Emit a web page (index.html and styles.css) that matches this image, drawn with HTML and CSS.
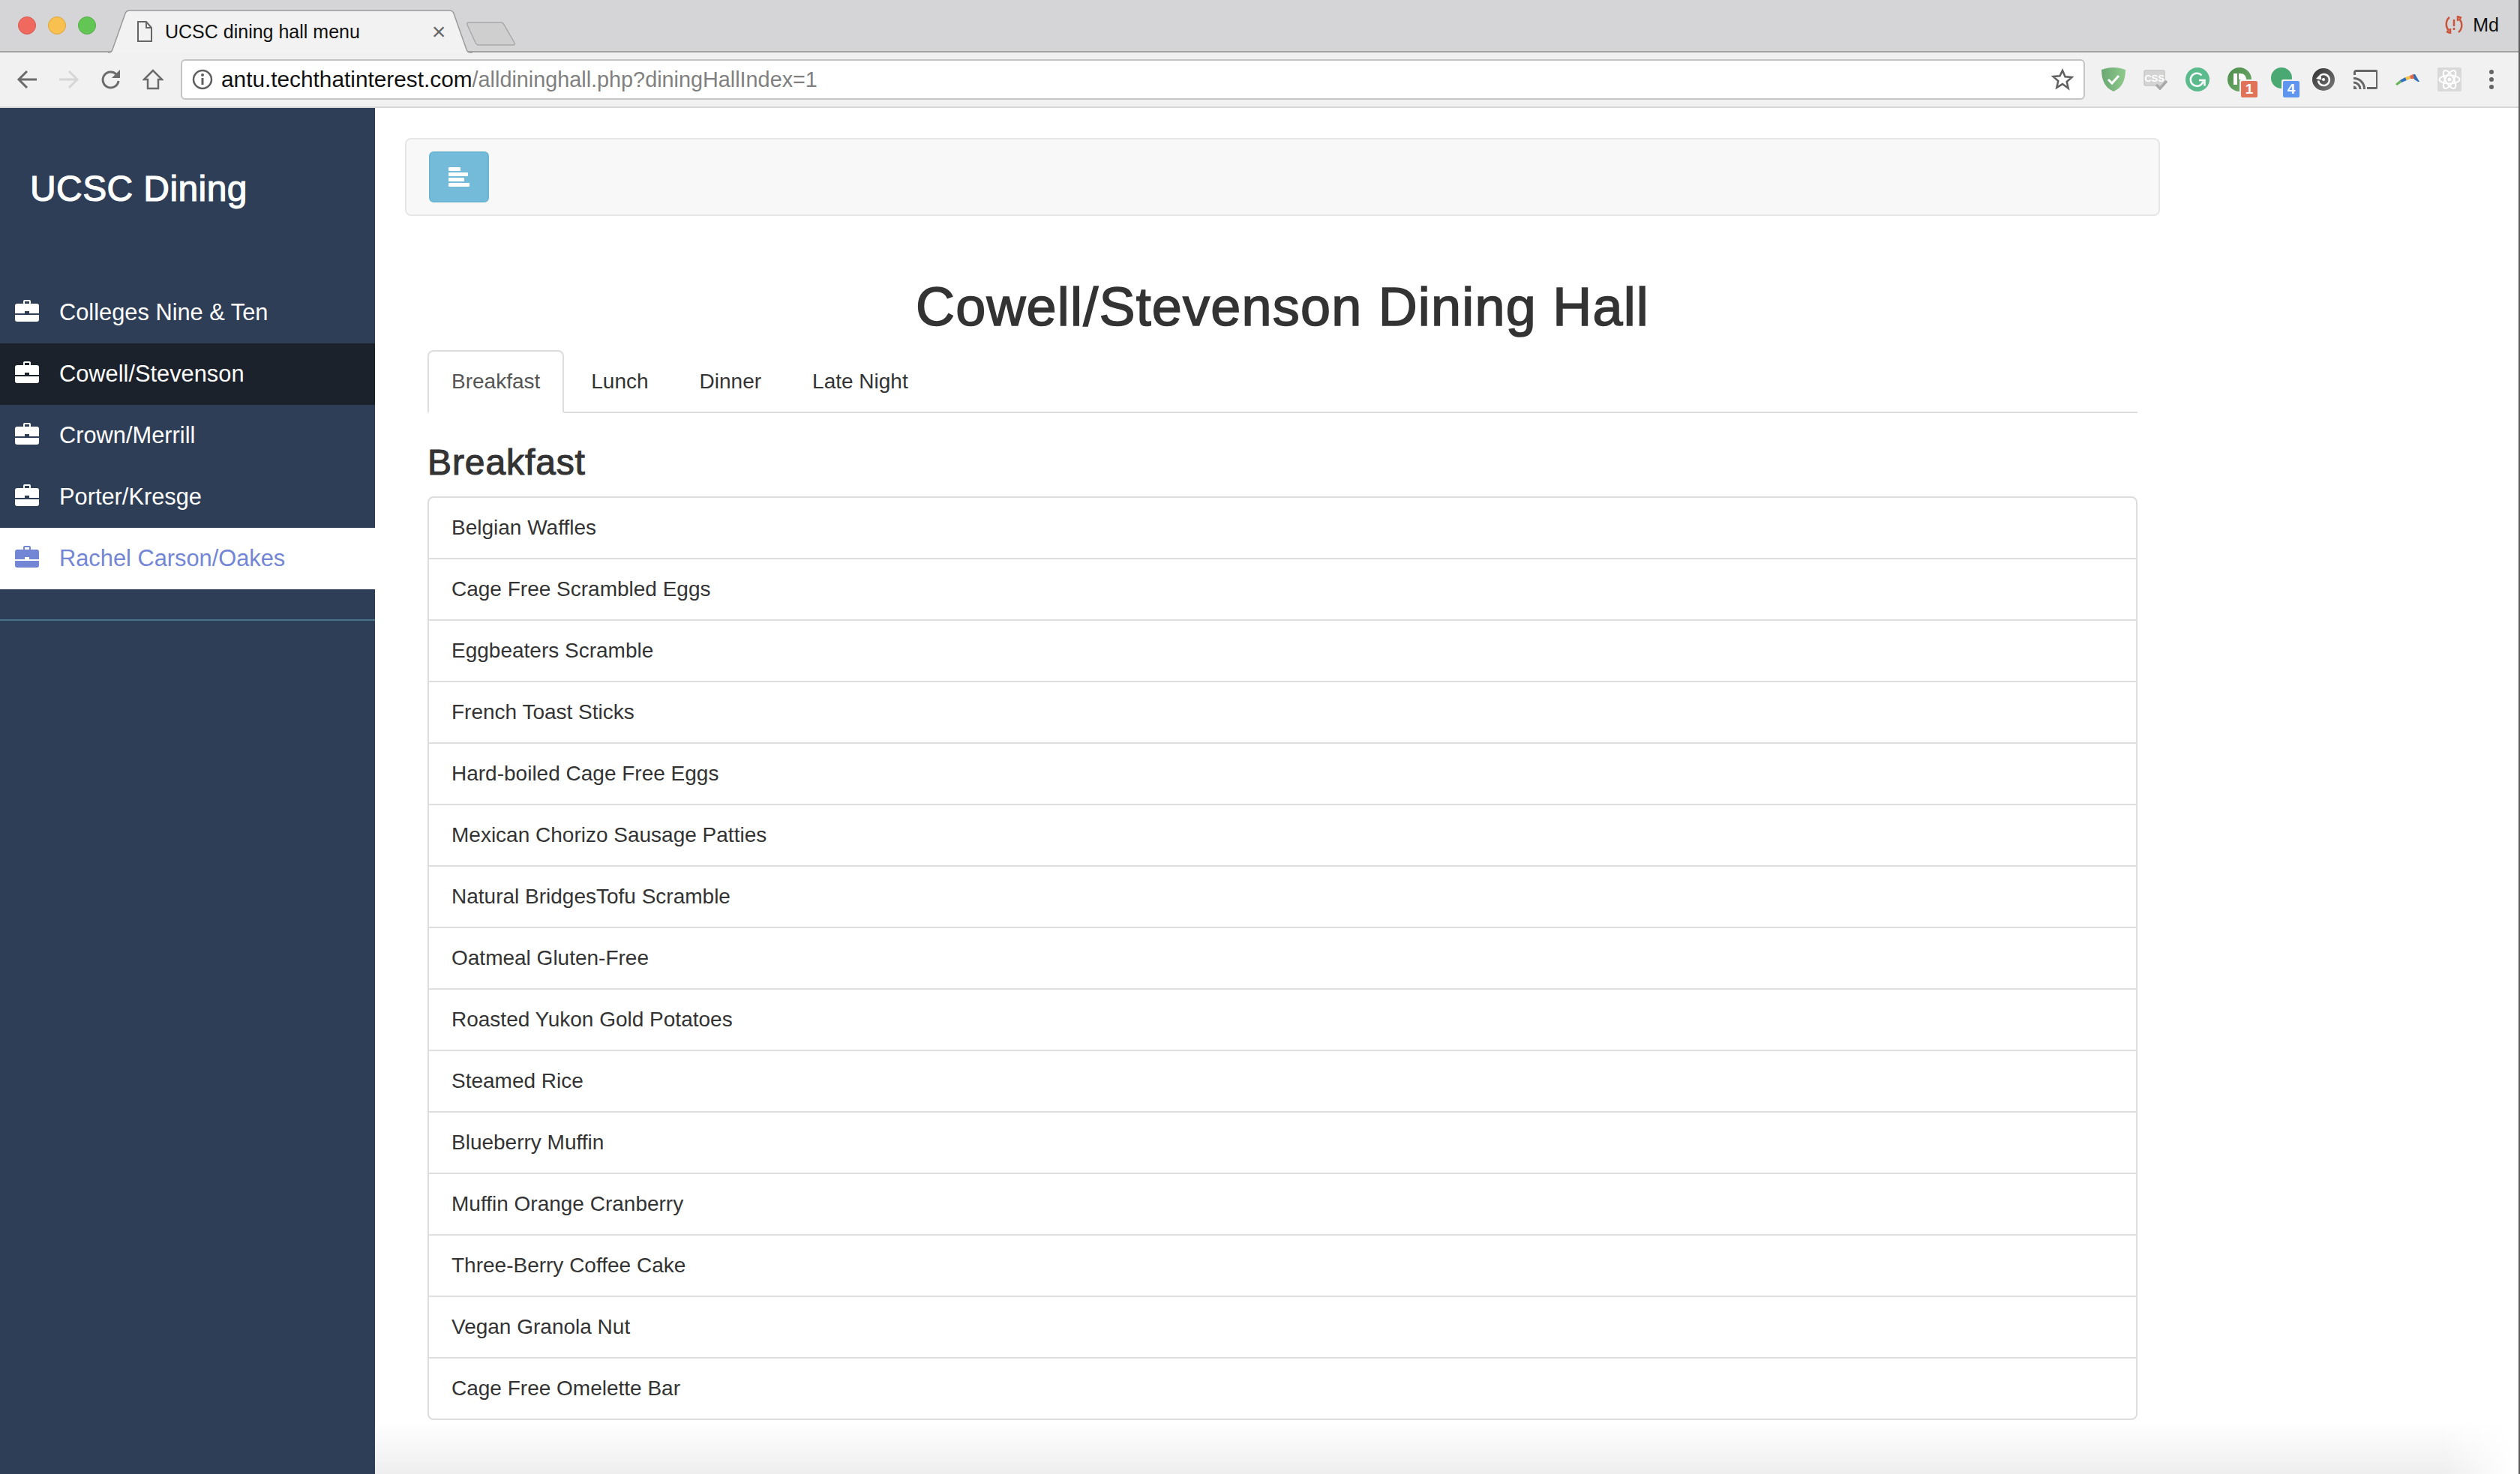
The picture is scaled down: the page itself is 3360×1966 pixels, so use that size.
FILE: index.html
```html
<!DOCTYPE html>
<html lang="en">
<head>
    <meta charset="UTF-8">
    <meta name="viewport" content="width=device-width, initial-scale=1.0">
    <title>UCSC dining hall menu</title>
    <link rel="stylesheet" href="styles.css">
</head>
<body>

<svg class="sprite" width="0" height="0">
    <defs>
        <linearGradient id="shield-fill" x1="0" x2="1" y1="0" y2="0"><stop offset="0" stop-color="#6aa873"/><stop offset="1" stop-color="#8fc98c"/></linearGradient>
        <linearGradient id="inv-fill" x1="0" x2="1" y1="0" y2="1"><stop offset="0" stop-color="#4e8c4c"/><stop offset="1" stop-color="#6fae6b"/></linearGradient>
        <linearGradient id="sync-fill" x1="0" x2="1" y1="0" y2="1"><stop offset="0" stop-color="#2f2f2f"/><stop offset="1" stop-color="#7c7c7c"/></linearGradient>
    </defs>
    <symbol id="briefcase" viewBox="0 0 32 29">
        <path d="M11 5V2a2 2 0 0 1 2-2h6a2 2 0 0 1 2 2v3h8a3 3 0 0 1 3 3v10H19v-3h-6v3H0V8a3 3 0 0 1 3-3zm2 0h6V2h-6zM0 20h32v6a3 3 0 0 1-3 3H3a3 3 0 0 1-3-3z"/>
    </symbol>
</svg>

<div class="browser-top">
    <div class="tabstrip">
        <div class="lights">
            <span class="light red"></span>
            <span class="light yellow"></span>
            <span class="light green"></span>
        </div>
        <div class="tab">
            <svg class="tab-shape" width="486" height="58" viewBox="0 0 486 58"><path d="M0 57h1c3 0 4-1 5-4L23 5c1-3 3-4 6-4h426c3 0 5 1 6 4l17 48c1 3 2 4 5 4h3" fill="#f2f2f2" stroke="#9b9b9b" stroke-width="1.500"/></svg>
            <svg class="tab-doc" width="20" height="28" viewBox="0 0 20 28"><path d="M1 1h11l7 8v18H1z M12 1v8h7" fill="none" stroke="#666" stroke-width="2"/></svg>
            <span class="tab-title">UCSC dining hall menu</span>
            <span class="tab-close">×</span>
        </div>
        <svg class="newtab" width="66" height="32" viewBox="0 0 66 32"><path d="M3 1h43c2 0 3 1 4 3l14 24c1 2 0 3-2 3H16c-2 0-3-1-4-3L1 4c-1-2 0-3 2-3z" fill="#cfcfcf" stroke="#a9a9a9" stroke-width="1.500"/></svg>
        <div class="profile">
            <svg width="26" height="24" viewBox="0 0 26 24"><path d="M7 2C2 6 1 14 6 20M19 22c5-4 6-12 1-18M8 17v6l-5-2M18 7V1l5 2" fill="none" stroke="#c9553c" stroke-width="2.500"/><path d="M13 5v9M13 16v3" stroke="#c9553c" stroke-width="2.500"/></svg>
            <span>Md</span>
        </div>
    </div>

    <div class="toolbar">
        <div class="tool"><svg width="28" height="26" viewBox="0 0 28 26"><path d="M27 13H3M14 2L3 13l11 11" fill="none" stroke="#6b6b6b" stroke-width="3"/></svg></div>
        <div class="tool"><svg width="28" height="26" viewBox="0 0 28 26"><path d="M1 13h24M14 2l11 11-11 11" fill="none" stroke="#d6d6d6" stroke-width="3"/></svg></div>
        <div class="tool"><svg width="28" height="28" viewBox="0 0 28 28"><path d="M24 16a10.500 10.500 0 1 1-3-9" fill="none" stroke="#6b6b6b" stroke-width="3"/><path d="M26 1v11H15z" fill="#6b6b6b"/></svg></div>
        <div class="tool"><svg width="28" height="28" viewBox="0 0 28 28"><path d="M14 2L2 14h5v12h14V14h5z" fill="none" stroke="#6b6b6b" stroke-width="2.500"/></svg></div>

        <div class="address">
            <svg class="info" width="28" height="28" viewBox="0 0 28 28"><circle cx="14" cy="14" r="12" fill="none" stroke="#5f5f5f" stroke-width="2.500"/><path d="M14 12v9" stroke="#5f5f5f" stroke-width="3"/><circle cx="14" cy="8" r="2" fill="#5f5f5f"/></svg>
            <span class="url">antu.techthatinterest.com<span class="url-path">/alldininghall.php?diningHallIndex=1</span></span>
            <svg class="star" width="30" height="30" viewBox="0 0 30 30"><path d="M15 3l3.500 8.300 9 .8-6.800 5.900 2 8.800L15 21.100l-7.700 4.700 2-8.800-6.800-5.900 9-.8z" fill="none" stroke="#5f5f5f" stroke-width="2.500"/></svg>
        </div>

        <div class="extensions">
            <div class="ext"><svg width="32" height="32" viewBox="0 0 32 32"><path d="M16 0c5 0 11 1 16 3 0 13-4 24-16 29C4 27 0 16 0 3c5-2 11-3 16-3z" fill="url(#shield-fill)"/><path d="M9 16l5 5 9-10" fill="none" stroke="#fff" stroke-width="3"/></svg></div>
            <div class="ext"><svg width="32" height="27" viewBox="0 0 32 27"><rect x="1" y="1" width="27" height="20" rx="2" fill="#d4d4d4" stroke="#c6c6c6" stroke-width="1.500"/><path d="M17 20l5 5 9-10" fill="none" stroke="#a9a9a9" stroke-width="3.500"/><text x="14.500" y="16" text-anchor="middle" class="css-text">CSS</text></svg></div>
            <div class="ext"><svg width="32" height="32" viewBox="0 0 32 32"><circle cx="16" cy="16" r="16" fill="#5bbb8d"/><path d="M21.500 10.500a8.500 8.500 0 1 0 2 8" fill="none" stroke="#fff" stroke-width="2.500"/><path d="M18 17h7.500v7.500" fill="none" stroke="#fff" stroke-width="2.500"/></svg></div>
            <div class="ext">
                <svg width="32" height="32" viewBox="0 0 32 32"><circle cx="16" cy="16" r="16" fill="url(#inv-fill)"/><path d="M8 8h5v15H8zM15 8h2c5 0 8 3 8 8h-10z" fill="#fff"/></svg>
                <span class="badge badge-red">1</span>
            </div>
            <div class="ext">
                <svg class="ext-up" width="28" height="28" viewBox="0 0 28 28"><circle cx="14" cy="14" r="14" fill="#4aa872"/></svg>
                <span class="badge badge-blue">4</span>
            </div>
            <div class="ext"><svg width="30" height="30" viewBox="0 0 30 30"><circle cx="15" cy="15" r="15" fill="url(#sync-fill)"/><path d="M11 9.500a7.500 7.500 0 1 1-3 7" fill="none" stroke="#fff" stroke-width="2.500"/><path d="M5 14l6-6 1.500 7.500z" fill="#fff"/><circle cx="15" cy="15" r="2" fill="#fff"/></svg></div>
            <div class="ext"><svg width="32" height="26" viewBox="0 0 32 26"><path d="M1.500 7V3.500a2 2 0 0 1 2-2h26a2 2 0 0 1 2 2v19a2 2 0 0 1-2 2H18" fill="none" stroke="#666" stroke-width="3"/><path d="M0 11.500a14 14 0 0 1 14.500 14.500M0 17a9 9 0 0 1 9 9" fill="none" stroke="#666" stroke-width="3"/><path d="M0 21.500a4.500 4.500 0 0 1 4.500 4.500H0z" fill="#666"/></svg></div>
            <div class="ext"><svg width="32" height="15" viewBox="0 0 32 15"><path d="M0 13L6 8l2 3-6 4z" fill="#6db35c"/><path d="M6 8l7-4 2 4-7 3z" fill="#2f6fb5"/><path d="M13 4l6-2 1 4-5 2z" fill="#efc24a"/><path d="M19 2l5-2 3 6-7 0z" fill="#e0684a"/><path d="M24 0l2 0 6 10-2 0-5-3z" fill="#2f6fb5"/></svg></div>
            <div class="ext"><svg width="32" height="32" viewBox="0 0 32 32"><rect width="32" height="32" rx="2" fill="#d9d9d9"/><g fill="none" stroke="#fff" stroke-width="2"><ellipse cx="16" cy="16" rx="13.500" ry="5.500"/><ellipse cx="16" cy="16" rx="13.500" ry="5.500" transform="rotate(60 16 16)"/><ellipse cx="16" cy="16" rx="13.500" ry="5.500" transform="rotate(120 16 16)"/></g><circle cx="16" cy="16" r="2.500" fill="#fff"/></svg></div>
            <div class="ext"><svg width="6" height="26" viewBox="0 0 6 26"><circle cx="3" cy="3" r="3" fill="#666"/><circle cx="3" cy="13" r="3" fill="#666"/><circle cx="3" cy="23" r="3" fill="#666"/></svg></div>
        </div>
    </div>
</div>

<div class="wrapper">
    <nav class="sidebar">
        <div class="sidebar-header">
            <h3>UCSC Dining</h3>
        </div>
        <ul class="hall-list">
            <li><a href="#"><svg class="case"><use href="#briefcase"/></svg>Colleges Nine &amp; Ten</a></li>
            <li class="current"><a href="#"><svg class="case"><use href="#briefcase"/></svg>Cowell/Stevenson</a></li>
            <li><a href="#"><svg class="case"><use href="#briefcase"/></svg>Crown/Merrill</a></li>
            <li><a href="#"><svg class="case"><use href="#briefcase"/></svg>Porter/Kresge</a></li>
            <li class="hovered"><a href="#"><svg class="case"><use href="#briefcase"/></svg>Rachel Carson/Oakes</a></li>
        </ul>
    </nav>

    <main class="content">
        <div class="topnav">
            <button class="toggle-btn">
                <svg width="28" height="26" viewBox="0 0 28 26"><g fill="#fff"><rect width="16" height="5" rx="1"/><rect y="7" width="26" height="5" rx="1"/><rect y="14" width="21" height="5" rx="1"/><rect y="21" width="28" height="5" rx="1"/></g></svg>
            </button>
        </div>

        <div class="container">
            <h1>Cowell/Stevenson Dining Hall</h1>

            <ul class="tabs">
                <li class="active"><a href="#">Breakfast</a></li>
                <li><a href="#">Lunch</a></li>
                <li><a href="#">Dinner</a></li>
                <li><a href="#">Late Night</a></li>
            </ul>

            <h3 class="meal">Breakfast</h3>
            <ul class="menu-list">
                <li>Belgian Waffles</li>
                <li>Cage Free Scrambled Eggs</li>
                <li>Eggbeaters Scramble</li>
                <li>French Toast Sticks</li>
                <li>Hard-boiled Cage Free Eggs</li>
                <li>Mexican Chorizo Sausage Patties</li>
                <li>Natural BridgesTofu Scramble</li>
                <li>Oatmeal Gluten-Free</li>
                <li>Roasted Yukon Gold Potatoes</li>
                <li>Steamed Rice</li>
                <li>Blueberry Muffin</li>
                <li>Muffin Orange Cranberry</li>
                <li>Three-Berry Coffee Cake</li>
                <li>Vegan Granola Nut</li>
                <li>Cage Free Omelette Bar</li>
            </ul>
        </div>
        <div class="bottom-fade"></div>
    </main>
</div>

</body>
</html>
```
FILE: styles.css
```css
/* Page */
* {
    box-sizing: border-box;
}

html, body {
    height: 100%;
}

body {
    margin: 0;
    display: flex;
    flex-direction: column;
    overflow: hidden;
    font-family: 'Liberation Sans', Arial, sans-serif;
    font-size: 28px;
    line-height: 40px;
    color: #333;
    background: #fff;
    border-right: 2px solid #5c5c5c;
}

.sprite {
    position: absolute;
}

/* Browser window top */
.tabstrip {
    height: 70px;
    display: flex;
    background: #d5d5d7;
    border-bottom: 2px solid #a3a3a3;
}

.lights {
    width: 144px;
    padding: 22px 0 0 24px;
    display: flex;
    gap: 16px;
    flex: none;
}

.light {
    width: 24px;
    height: 24px;
    border-radius: 50%;
}

.red { background: #f0695f; border: 1px solid #d9574d; }
.yellow { background: #f8c04e; border: 1px solid #dfa63b; }
.green { background: #62c554; border: 1px solid #52ad45; }

.tab {
    position: relative;
    width: 484px;
    height: 70px;
    flex: none;
    display: flex;
    align-items: center;
    padding: 14px 0 0 39px;
    font-size: 25px;
    color: #111;
}

.tab-shape {
    position: absolute;
    left: 0;
    top: 13px;
}

.tab-doc,
.tab-title,
.tab-close {
    position: relative;
}

.tab-title {
    margin-left: 17px;
}

.tab-close {
    margin-left: 96px;
    font-size: 32px;
    color: #666;
}

.newtab {
    margin: 29px 0 0 -6px;
    flex: none;
}

.profile {
    margin-left: auto;
    padding: 0 26px 2px 0;
    display: flex;
    align-items: center;
    gap: 12px;
    font-size: 25px;
    color: #111;
}

.toolbar {
    height: 74px;
    padding-left: 8px;
    display: flex;
    align-items: center;
    background: #f1f1f1;
    border-bottom: 2px solid #d8d8d8;
}

.tool {
    width: 56px;
    display: flex;
    justify-content: center;
}

.address {
    width: 2539px;
    height: 54px;
    margin-left: 9px;
    padding: 0 13px;
    display: flex;
    align-items: center;
    background: #fff;
    border: 2px solid #c4c4c4;
    border-radius: 6px;
}

.url {
    margin-left: 11px;
    font-size: 29.800px;
    color: #111;
}

.url-path {
    font-size: 28.800px;
    color: #808080;
}

.star {
    margin-left: auto;
}

.extensions {
    margin-left: 10px;
    display: flex;
}

.ext {
    position: relative;
    width: 56px;
    height: 54px;
    display: flex;
    align-items: center;
    justify-content: center;
}

.ext-up {
    margin-bottom: 4px;
}

.css-text {
    font-size: 13px;
    font-weight: bold;
    fill: #fff;
}

.badge {
    position: absolute;
    left: 30px;
    top: 29px;
    width: 22px;
    height: 22px;
    border-radius: 2px;
    font-size: 19px;
    font-weight: bold;
    line-height: 22px;
    text-align: center;
    color: #fff;
}

.badge-red { background: #e0735a; box-shadow: -2px -2px 0 #f1f1f1; }
.badge-blue { background: #5f95ee; box-shadow: -2px -2px 0 #f1f1f1; }

/* Layout */
.wrapper {
    flex: 1;
    display: flex;
    min-height: 0;
}

.sidebar {
    width: 500px;
    flex: none;
    background: #2f3e57;
    color: #fff;
}

.sidebar-header {
    padding: 42px 40px 38px;
}

/* Headings get a thin stroke: no medium weight of the font is installed */
.sidebar-header h3 {
    margin: 40px 0 20px;
    font-size: 48px;
    font-weight: 400;
    line-height: 52px;
    letter-spacing: 0.400px;
    -webkit-text-stroke: 1.100px;
}

.hall-list {
    list-style: none;
    margin: 0;
    padding: 40px 0;
    border-bottom: 2px solid #47748b;
}

.hall-list a {
    height: 82px;
    padding-left: 20px;
    display: flex;
    align-items: center;
    font-size: 30.800px;
    color: #fff;
    text-decoration: none;
}

.case {
    width: 32px;
    height: 29px;
    margin: -6px 27px 0 0;
    fill: currentColor;
    flex: none;
}

.current a {
    background: #1c222b;
}

.hovered a {
    background: #fff;
    color: #7386d5;
}

.content {
    position: relative;
    flex: 1;
    padding: 40px;
}

.topnav {
    width: 2340px;
    height: 104px;
    padding: 16px 30px;
    margin-bottom: 82px;
    background: #f8f8f8;
    border: 2px solid #e7e7e7;
    border-radius: 8px;
}

.toggle-btn {
    width: 80px;
    height: 68px;
    padding: 0;
    display: flex;
    align-items: center;
    justify-content: center;
    background: #73bbd9;
    border: 2px solid #6db5d4;
    border-radius: 6px;
}

.container {
    width: 2340px;
    padding: 0 30px;
}

h1 {
    margin: 0 0 18px;
    font-size: 72px;
    font-weight: 400;
    line-height: 1.100;
    letter-spacing: 1.200px;
    -webkit-text-stroke: 1.600px;
    text-align: center;
}

.tabs {
    list-style: none;
    margin: 0;
    padding: 0;
    display: flex;
    border-bottom: 2px solid #ddd;
}

.tabs li {
    margin: 0 4px -2px 0;
}

.tabs a {
    display: block;
    padding: 20px 30px;
    border: 2px solid transparent;
    border-radius: 8px 8px 0 0;
    color: #333;
    text-decoration: none;
}

.tabs .active a {
    color: #555;
    background: #fff;
    border-color: #ddd #ddd #fff;
}

.meal {
    margin: 40px 0 18px;
    font-size: 48px;
    font-weight: 400;
    line-height: 1.100;
    letter-spacing: 0.900px;
    -webkit-text-stroke: 1.100px;
}

.menu-list {
    list-style: none;
    margin: 0;
    padding: 0;
}

.menu-list li {
    padding: 20px 30px;
    margin-bottom: -2px;
    border: 2px solid #ddd;
}

.menu-list li:first-child {
    border-radius: 8px 8px 0 0;
}

.menu-list li:last-child {
    border-radius: 0 0 8px 8px;
}

.bottom-fade {
    position: absolute;
    left: 0;
    right: 0;
    bottom: 0;
    height: 72px;
    background: linear-gradient(rgba(238, 238, 238, 0), #eee);
    -webkit-mask-image: linear-gradient(to left, transparent 6px, #000 100px);
}
```
